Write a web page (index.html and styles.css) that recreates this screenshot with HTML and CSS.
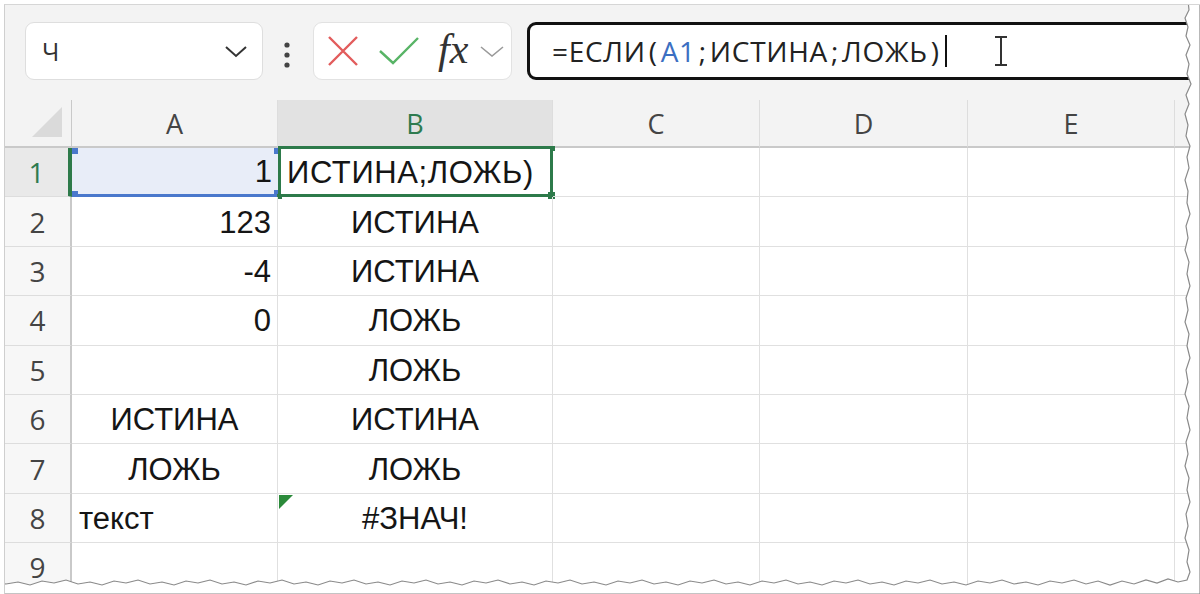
FILE: index.html
```html
<!DOCTYPE html>
<html lang="ru">
<head>
<meta charset="utf-8">
<title>ЕСЛИ</title>
<link rel="stylesheet" href="styles.css">
</head>
<body>
<div class="frame">
  <div class="toolbar">
    <div class="namebox">
      <span class="name">Ч</span>
      <svg class="chev" width="24" height="14" viewBox="0 0 24 14"><path d="M2 3 L12 12 L22 3" fill="none" stroke="#333" stroke-width="2"/></svg>
    </div>
    <svg class="dots" width="8" height="28" viewBox="0 0 8 28"><circle cx="4" cy="4" r="2.6" fill="#444"/><circle cx="4" cy="14" r="2.6" fill="#444"/><circle cx="4" cy="24" r="2.6" fill="#444"/></svg>
    <div class="fxbox">
      <svg class="ico" width="32" height="30" viewBox="0 0 32 30"><path d="M2 1 L30 29 M30 1 L2 29" fill="none" stroke="#e25c5c" stroke-width="2.4"/></svg>
      <svg class="ico ok" width="40" height="28" viewBox="0 0 40 28"><path d="M1 14 L14 26 L39 1" fill="none" stroke="#58b466" stroke-width="2.4"/></svg>
      <span class="fx">fx</span>
      <svg class="chev2" width="24" height="12" viewBox="0 0 24 12"><path d="M1 2 L12 11 L23 2" fill="none" stroke="#9a9a9a" stroke-width="1.6"/></svg>
    </div>
    <div class="formula">
      <span class="ftext">=ЕСЛИ<span class="p">(</span><span class="ref">A1</span><span class="p">;</span>ИСТИНА<span class="p">;</span>ЛОЖЬ<span class="p">)</span></span><span class="caret"></span>
      <svg class="ibeam" width="16" height="32" viewBox="0 0 16 32"><path d="M2 2 H14 M8 2 V30 M2 30 H14" fill="none" stroke="#333" stroke-width="2"/></svg>
    </div>
  </div>
  <div class="sheet">
    <div class="ch corner"><span class="tri"></span></div>
    <div class="ch">A</div>
    <div class="ch sel">B</div>
    <div class="ch">C</div>
    <div class="ch">D</div>
    <div class="ch">E</div>
    <div class="ch"></div>

    <div class="rh rsel">1</div>
    <div class="c r reffed">1<span class="k k1"></span><span class="k k2"></span><span class="k k3"></span><span class="k k4"></span></div>
    <div class="c l active">ИСТИНА;ЛОЖЬ)<span class="h h1"></span><span class="h h2"></span><span class="h h3"></span></div>
    <div class="c"></div><div class="c"></div><div class="c"></div><div class="c"></div>

    <div class="rh">2</div>
    <div class="c r">123</div>
    <div class="c m">ИСТИНА</div>
    <div class="c"></div><div class="c"></div><div class="c"></div><div class="c"></div>

    <div class="rh">3</div>
    <div class="c r">-4</div>
    <div class="c m">ИСТИНА</div>
    <div class="c"></div><div class="c"></div><div class="c"></div><div class="c"></div>

    <div class="rh">4</div>
    <div class="c r">0</div>
    <div class="c m">ЛОЖЬ</div>
    <div class="c"></div><div class="c"></div><div class="c"></div><div class="c"></div>

    <div class="rh">5</div>
    <div class="c"></div>
    <div class="c m">ЛОЖЬ</div>
    <div class="c"></div><div class="c"></div><div class="c"></div><div class="c"></div>

    <div class="rh">6</div>
    <div class="c m">ИСТИНА</div>
    <div class="c m">ИСТИНА</div>
    <div class="c"></div><div class="c"></div><div class="c"></div><div class="c"></div>

    <div class="rh">7</div>
    <div class="c m">ЛОЖЬ</div>
    <div class="c m">ЛОЖЬ</div>
    <div class="c"></div><div class="c"></div><div class="c"></div><div class="c"></div>

    <div class="rh">8</div>
    <div class="c l">текст</div>
    <div class="c m err">#ЗНАЧ!</div>
    <div class="c"></div><div class="c"></div><div class="c"></div><div class="c"></div>

    <div class="rh">9</div>
    <div class="c"></div><div class="c"></div>
    <div class="c"></div><div class="c"></div><div class="c"></div><div class="c"></div>
  </div>
  <svg class="torn" width="1200" height="594" viewBox="0 0 1200 594">
    <path d="M1188 0 L1189 10 L1185 18 L1188 27 L1186 36 L1190 45 L1186 55 L1189 64 L1187 74 L1191 84 L1186 95 L1189 104 L1185 114 L1188 125 L1186 136 L1190 146 L1187 157 L1189 168 L1185 180 L1188 191 L1187 203 L1190 214 L1186 226 L1188 238 L1185 250 L1189 262 L1187 274 L1190 286 L1186 298 L1188 310 L1185 322 L1189 334 L1187 346 L1190 358 L1186 370 L1188 382 L1185 394 L1189 406 L1187 418 L1190 430 L1186 442 L1188 454 L1185 466 L1189 478 L1187 490 L1190 502 L1186 514 L1188 526 L1185 538 L1189 550 L1187 562 L1190 572 L1187 580 L1178 582 L1168 579 L1157 583 L1146 580 L1134 584 L1122 581 L1110 585 L1098 581 L1086 584 L1074 580 L1062 583 L1050 581 L1038 585 L1026 582 L1014 584 L1002 580 L990 583 L978 581 L966 585 L954 582 L942 584 L930 580 L918 583 L906 581 L894 585 L882 582 L870 584 L858 580 L846 583 L834 581 L822 585 L810 582 L798 584 L786 580 L774 583 L762 581 L750 585 L738 582 L726 584 L714 580 L702 583 L690 581 L678 585 L666 582 L654 584 L642 580 L630 583 L618 581 L606 585 L594 582 L582 584 L570 580 L558 583 L546 581 L534 585 L522 582 L510 584 L498 580 L486 583 L474 581 L462 585 L450 582 L438 584 L426 580 L414 583 L402 581 L390 585 L378 582 L366 584 L354 580 L342 583 L330 581 L318 585 L306 582 L294 584 L282 580 L270 583 L258 581 L246 585 L234 582 L222 584 L210 580 L198 583 L186 581 L174 585 L162 582 L150 584 L138 580 L126 583 L114 581 L102 585 L90 582 L78 584 L66 580 L54 583 L42 581 L30 585 L18 582 L6 584 L0 583 L0 594 L1200 594 L1200 0 Z" fill="#ffffff" stroke="#8a8a8a" stroke-width="1.2"/>
  </svg>
</div>
</body>
</html>
```

FILE: styles.css
```css
* { box-sizing: border-box; }
html, body { margin: 0; padding: 0; background: #ffffff; }
body { width: 1200px; height: 594px; overflow: hidden; font-family: "Liberation Sans", Arial, sans-serif; }

.frame {
  position: relative;
  margin: 4px 0 0 4px;
  width: 1196px;
  height: 590px;
  overflow: hidden;
  border-left: 1px solid #cfcfcf;
  border-top: 1px solid #d6d6d6;
  background: #ffffff;
}

.toolbar {
  height: 95px;
  background: #f3f3f3;
  display: flex;
  align-items: flex-start;
  padding: 17px 0 0 20px;
}
.toolbar > * { flex-shrink: 0; }

.namebox {
  width: 238px;
  height: 58px;
  background: #fff;
  border: 1px solid #dedede;
  border-radius: 9px;
  display: flex;
  align-items: center;
  padding: 0 14px 0 16px;
  justify-content: space-between;
}
.name { font-family: "Open Sans", "Noto Sans", sans-serif; font-size: 25px; color: #333; }

.dots { margin: 19px 0 0 20px; }

.fxbox {
  margin-left: 22px;
  width: 199px;
  height: 58px;
  background: #fff;
  border: 1px solid #e2e2e2;
  border-radius: 9px;
  display: flex;
  align-items: center;
  padding-left: 13px;
}
.fxbox .ok { margin-left: 20px; }
.fx {
  font-family: "Liberation Serif", "DejaVu Serif", serif;
  font-style: italic;
  font-size: 42px;
  color: #333;
  margin-left: 19px;
  line-height: 1;
  margin-top: -4px;
}
.chev2 { margin-left: 12px; }

.formula {
  margin-left: 15px;
  width: 700px;
  height: 58px;
  background: #fff;
  border: 3px solid #111;
  border-radius: 9px;
  display: flex;
  align-items: center;
  padding-left: 22px;
}
.ftext {
  font-family: "Open Sans", "Noto Sans", sans-serif;
  font-size: 28px;
  color: #222;
  letter-spacing: 0.7px;
  white-space: nowrap;
}
.ftext .p { padding: 0 3px; }
.ref { color: #3c6fc2; }
.caret { width: 2px; height: 32px; background: #111; margin-left: 2px; }
.ibeam { margin-left: 46px; }

.sheet {
  display: grid;
  grid-template-columns: 67px 206px 275px 207px 208px 207px 120px;
  grid-template-rows: 48px repeat(9, 49.4px);
}

.ch {
  background: #f3f3f3;
  border-right: 1px solid #dddddd;
  border-bottom: 2px solid #c9c9c9;
  display: flex;
  align-items: center;
  justify-content: center;
  font-family: "Open Sans", "Noto Sans", sans-serif;
  font-size: 27px;
  color: #444;
}
.ch.sel { background: #e2e2e2; color: #2e7b4f; }
.corner { position: relative; border-right: 1px solid #c9c9c9; }
.tri {
  position: absolute;
  right: 9px;
  bottom: 9px;
  width: 0; height: 0;
  border-left: 30px solid transparent;
  border-bottom: 30px solid #dadada;
}

.rh {
  background: #f7f7f7;
  border-right: 2px solid #c9c9c9;
  border-bottom: 1px solid #dddddd;
  display: flex;
  align-items: center;
  justify-content: center;
  font-family: "Open Sans", "Noto Sans", sans-serif;
  font-size: 28px;
  color: #444;
}
.rh.rsel { background: #e9e9e9; color: #2e7b4f; border-right: 4px solid #2d7a4a; }

.c {
  position: relative;
  border-right: 1px solid #e0e0e0;
  border-bottom: 1px solid #e0e0e0;
  display: flex;
  align-items: center;
  font-size: 31px;
  color: #151515;
  white-space: nowrap;
  padding: 2px 7px 0 7px;
}
.c.r { justify-content: flex-end; padding-right: 6px; }
.c.m { justify-content: center; }
.c.l { justify-content: flex-start; }
.active { letter-spacing: 0.6px; }

.reffed { background: #e8edf8; border-bottom: 3px solid #4a78cc; border-right: none; }
.k { position: absolute; width: 6px; height: 6px; background: #4a78cc; }
.k1 { left: 0; top: 0; }
.k2 { right: -2px; top: 0; }
.k3 { left: 0; bottom: -3px; }
.k4 { right: -3px; bottom: -3px; width: 7px; height: 7px; }

.active { border: 3px solid #2d7a4a; padding-left: 6px; margin-top: -2px; }
.h { position: absolute; background: #2d7a4a; width: 7px; height: 7px; }
.h1 { right: -5px; bottom: -5px; }
.h2 { right: -5px; top: -3px; width: 5px; height: 5px; }
.h3 { left: -4px; bottom: -5px; width: 5px; height: 5px; }

.err::before {
  content: "";
  position: absolute;
  left: 1px;
  top: 1px;
  width: 0; height: 0;
  border-top: 14px solid #2b8a3a;
  border-right: 14px solid transparent;
}

.torn { position: absolute; left: -5px; top: -5px; pointer-events: none; }
```
